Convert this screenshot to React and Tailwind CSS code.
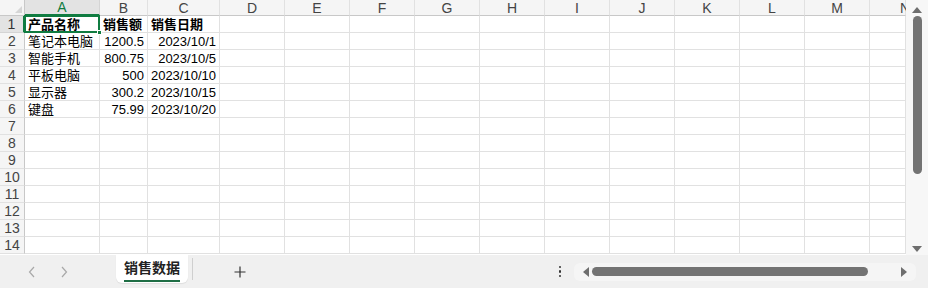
const COLS = ["A", "B", "C", "D", "E", "F", "G", "H", "I", "J", "K", "L", "M", "N"];

const ROWS = [
  ["产品名称", "销售额", "销售日期"],
  ["笔记本电脑", "1200.5", "2023/10/1"],
  ["智能手机", "800.75", "2023/10/5"],
  ["平板电脑", "500", "2023/10/10"],
  ["显示器", "300.2", "2023/10/15"],
  ["键盘", "75.99", "2023/10/20"],
];

function Cell({ r, c }) {
  const row = ROWS[r] || [];
  const value = row[c] || "";
  const isHead = r === 0;
  const alignRight = !isHead && (c === 1 || c === 2);
  const selected = r === 0 && c === 0;

  return (
    <div
      className={`relative flex items-center overflow-visible whitespace-nowrap border-b border-r border-[#e1e1e1] bg-white px-[3px] text-[13px] leading-none text-black ${
        alignRight ? "justify-end" : "justify-start"
      } ${isHead ? "font-bold" : ""}`}
    >
      {value}
      {selected && (
        <>
          <span className="pointer-events-none absolute -left-px -top-px bottom-[-1px] right-[-1px] border-2 border-[#107c41]" />
          <span className="absolute bottom-[-3px] right-[-3px] z-10 h-[5px] w-[5px] border border-white bg-[#107c41]" />
        </>
      )}
    </div>
  );
}

function Grid() {
  return (
    <div className="grid w-[906px] grid-cols-[25px_75px_48px_72px_repeat(10,65px)_36px] grid-rows-[16px_repeat(14,17px)]">
      <div className="relative border-b border-r border-[#c8c8c8] bg-[#f5f5f5]">
        <span className="absolute bottom-[2px] right-[2px] h-0 w-0 border-b-[7px] border-l-[7px] border-b-[#d6d6d6] border-l-transparent" />
      </div>
      {COLS.map((col, i) => (
        <div
          key={col}
          className={`flex items-center border-b border-r text-[14px] leading-none ${
            i === 0
              ? "border-b-2 border-b-[#107c41] border-r-[#d4d4d4] bg-[#e3e3e3] text-[#107c41]"
              : "border-b-[#c8c8c8] border-r-[#e1e1e1] bg-[#f5f5f5] text-[#444]"
          } ${i === 13 ? "justify-start pl-[30px]" : "justify-center"}`}
        >
          {col}
        </div>
      ))}
      {Array.from({ length: 14 }).map((_, r) => (
        <RowLine key={r} r={r} />
      ))}
    </div>
  );
}

function RowLine({ r }) {
  return (
    <>
      <div
        className={`flex items-center justify-center border-b border-r text-[14px] leading-none ${
          r === 0
            ? "border-b-[#d4d4d4] border-r-2 border-r-[#107c41] bg-[#e3e3e3] text-[#333]"
            : "border-b-[#e1e1e1] border-r-[#c8c8c8] bg-[#f5f5f5] text-[#444]"
        }`}
      >
        {r + 1}
      </div>
      {COLS.map((col, c) => (
        <Cell key={col} r={r} c={c} />
      ))}
    </>
  );
}

function VScroll() {
  return (
    <div className="flex w-[22px] flex-col items-center bg-[#f7f7f7]">
      <span className="mt-[7px] h-0 w-0 border-x-[5px] border-b-[6px] border-x-transparent border-b-[#6e6e6e]" />
      <span className="mt-[3px] h-[158px] w-[9px] rounded-full bg-[#737373]" />
      <span className="mt-auto mb-[3px] h-0 w-0 border-x-[5px] border-t-[6px] border-x-transparent border-t-[#6e6e6e]" />
    </div>
  );
}

function BottomBar() {
  return (
    <div className="flex h-[33px] items-start bg-[#f0f0f0]">
      <div className="flex h-full w-[116px] items-center">
        <svg className="ml-[28px]" width="8" height="12" viewBox="0 0 8 12">
          <path d="M6 1 L1.5 6 L6 11" fill="none" stroke="#a8a8a8" strokeWidth="1.2" />
        </svg>
        <svg className="ml-[24px]" width="8" height="12" viewBox="0 0 8 12">
          <path d="M2 1 L6.5 6 L2 11" fill="none" stroke="#a8a8a8" strokeWidth="1.2" />
        </svg>
      </div>
      <div className="flex h-[28px] w-[72px] flex-col items-center rounded-b-md bg-white shadow-[0_1px_1px_rgba(0,0,0,0.08)]">
        <span className="mt-[5px] text-[14px] font-bold leading-[16px] text-[#222]">销售数据</span>
        <span className="mt-[4px] h-[2px] w-[56px] bg-[#1f6e45]" />
      </div>
      <span className="ml-[4px] mt-[3px] h-[22px] w-px bg-[#cfcfcf]" />
      <div className="flex h-full w-[94px] items-center justify-center">
        <svg width="12" height="12" viewBox="0 0 12 12">
          <path d="M6 0.5 V11.5 M0.5 6 H11.5" stroke="#333" strokeWidth="1.2" />
        </svg>
      </div>
      <div className="ml-auto flex h-full items-center">
        <div className="flex flex-col gap-[2px]">
          <span className="h-[2.5px] w-[2.5px] rounded-full bg-[#333]" />
          <span className="h-[2.5px] w-[2.5px] rounded-full bg-[#333]" />
          <span className="h-[2.5px] w-[2.5px] rounded-full bg-[#333]" />
        </div>
        <div className="ml-[13px] mr-[12px] flex h-[18px] w-[342px] items-center rounded-md bg-[#f5f5f5] px-[9px]">
          <span className="h-0 w-0 border-y-[5px] border-r-[6px] border-y-transparent border-r-[#6e6e6e]" />
          <span className="ml-[3px] h-[9px] w-[276px] rounded-full bg-[#737373]" />
          <span className="ml-auto h-0 w-0 border-y-[5px] border-l-[6px] border-y-transparent border-l-[#6e6e6e]" />
        </div>
      </div>
    </div>
  );
}

export default function App() {
  return (
    <div
      className="flex h-[288px] w-[928px] flex-col overflow-hidden bg-white"
      style={{ fontFamily: '"Liberation Sans", Arial, "Noto Sans CJK SC", sans-serif' }}
    >
      <div className="flex h-[255px] overflow-hidden">
        <Grid />
        <VScroll />
      </div>
      <BottomBar />
    </div>
  );
}
